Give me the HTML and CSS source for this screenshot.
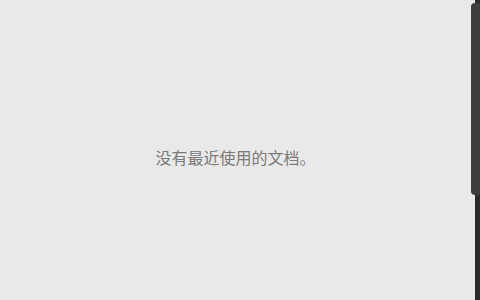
FILE: index.html
```html
<!DOCTYPE html>
<html lang="zh-CN">
<head>
    <meta charset="UTF-8">
    <meta name="viewport" content="width=device-width, initial-scale=1.0">
    <title>最近使用的文档</title>
    <link rel="stylesheet" href="styles.css">
</head>
<body>
    <div class="screen">
        <div class="content">
            <p class="empty">没有最近使用的文档。</p>
        </div>
        <!-- fake scrollbar at right edge -->
        <div class="scrollbar">
            <div class="thumb"></div>
        </div>
    </div>
</body>
</html>
```

FILE: styles.css
```css
body {
    margin: 0;
    background-color: #e9e9e9;
    font-family: "Noto Sans CJK SC", "Noto Sans", sans-serif;
}

.screen {
    display: flex;
    height: 300px;
    overflow: hidden;
}

.content {
    flex: 1;
    display: flex;
    align-items: center;
    justify-content: center;
    padding-top: 14px;
    padding-right: 4px;
}

.empty {
    margin: 0;
    font-size: 16px;
    color: #7a7a7a;
}

.scrollbar {
    width: 5px;
    background-color: #2b2b2b;
    position: relative;
}

.thumb {
    position: absolute;
    right: 0;
    top: 3px;
    width: 9px;
    height: 192px;
    background-color: #3d3d3d;
    border-radius: 4px 0 0 4px;
}
```
